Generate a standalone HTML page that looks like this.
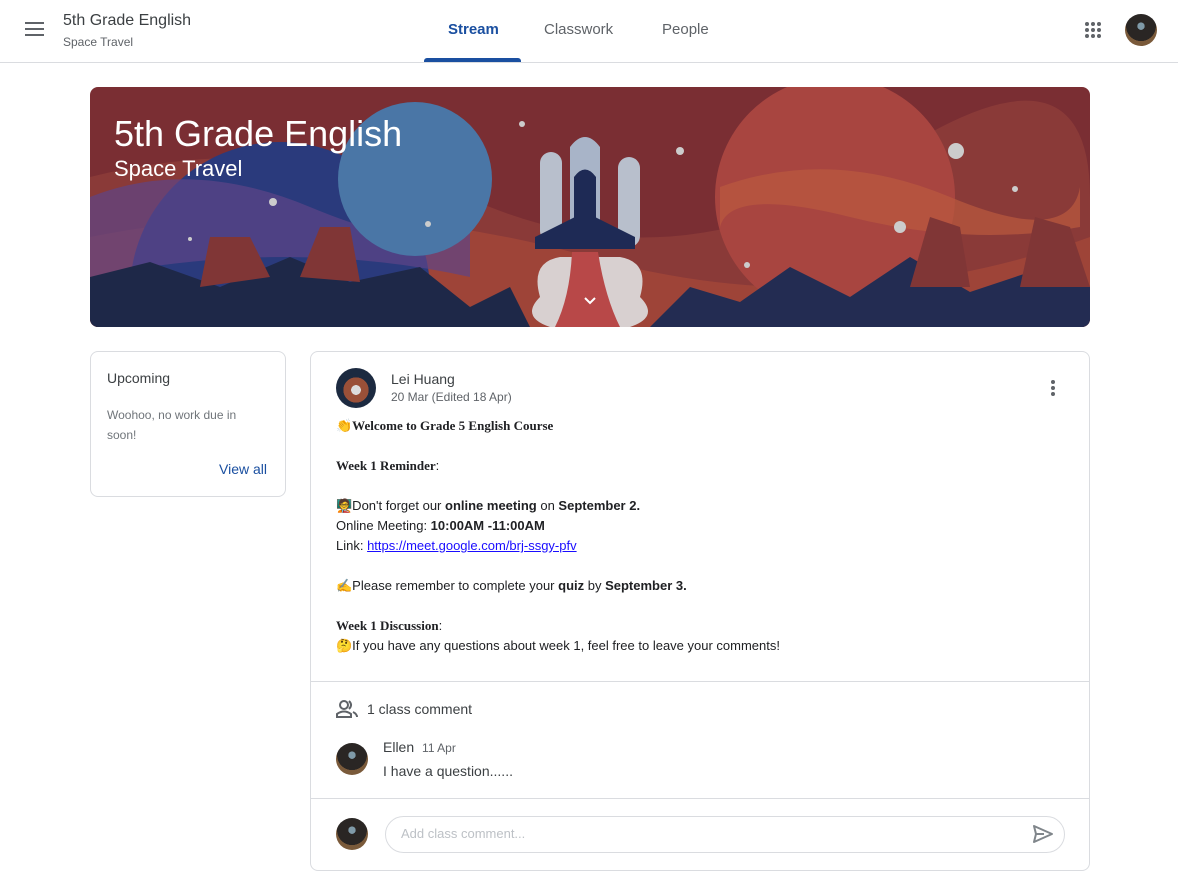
<!DOCTYPE html>
<html><head><meta charset="utf-8"><style>
*{box-sizing:border-box;margin:0;padding:0}
body{width:1178px;height:883px;overflow:hidden;background:#fff;font-family:"Liberation Sans",sans-serif;color:#3c4043;position:relative}
.a{position:absolute}
.hdr{left:0;top:0;width:1178px;height:63px;border-bottom:1px solid #dadce0}
.av{border-radius:50%;background:radial-gradient(circle at 50% 38%,#7f9aa8 0 14%,#2a2624 15% 58%,#7a5a3a 59%)}
.tab{top:21px;font-size:15px;color:#5f6368}
.card{border:1px solid #dadce0;border-radius:8px}
.post p{font-size:13px;line-height:20px;color:#202124;height:20px}
.serif{font-family:"Liberation Serif",serif;font-weight:bold}
</style></head><body>
<div class="a hdr">
 <div class="a" style="left:25px;top:22px;width:19px;height:2px;background:#5f6368;box-shadow:0 6px 0 #5f6368,0 12px 0 #5f6368"></div>
 <div class="a" style="left:63px;top:12px;font-size:16px;color:#3c4043">5th Grade English</div>
 <div class="a" style="left:63px;top:35px;font-size:12px;color:#5f6368">Space Travel</div>
 <div class="a tab" style="left:448px;color:#1a4fa0;font-weight:bold">Stream</div>
 <div class="a tab" style="left:544px">Classwork</div>
 <div class="a tab" style="left:662px">People</div>
 <div class="a" style="left:424px;top:58px;width:97px;height:4px;background:#1a4fa0;border-radius:3px 3px 0 0"></div>
 <svg class="a" style="left:1084px;top:21px" width="18" height="18"><g fill="#5f6368"><circle cx="3" cy="3" r="2"/><circle cx="9" cy="3" r="2"/><circle cx="15" cy="3" r="2"/><circle cx="3" cy="9" r="2"/><circle cx="9" cy="9" r="2"/><circle cx="15" cy="9" r="2"/><circle cx="3" cy="15" r="2"/><circle cx="9" cy="15" r="2"/><circle cx="15" cy="15" r="2"/></g></svg>
 <div class="a av" style="left:1125px;top:14px;width:32px;height:32px"></div>
</div>
<div class="a" style="left:90px;top:87px;width:1000px;height:240px;border-radius:8px;overflow:hidden;background:#7a2e33">
<svg width="1000" height="240" viewBox="0 0 1000 240">
 <path d="M0 90 Q200 40 400 120 T800 70 T1000 110 V240 H0Z" fill="#8a3a38"/>
 <path d="M0 150 Q250 100 500 170 T1000 150 V240 H0Z" fill="#9e4438"/>
 <circle cx="190" cy="205" r="150" fill="#2a3a7c"/>
 <path d="M0 110 Q100 70 220 120 T380 140 L380 190 Q200 150 0 190Z" fill="#5e4488" opacity=".7"/>
 <circle cx="325" cy="92" r="77" fill="#4a76a6"/>
 <circle cx="745" cy="110" r="120" fill="#a84540"/>
 <path d="M630 100 Q740 60 860 110 T990 100 V140 Q880 160 760 130 T630 140Z" fill="#bb5a3e" opacity=".7"/>
 <rect x="450" y="65" width="22" height="90" rx="11" fill="#b8bfcc"/>
 <rect x="528" y="70" width="22" height="90" rx="11" fill="#b8bfcc"/>
 <path d="M480 60 Q495 40 510 60 V150 H480Z" fill="#a8b4c8"/>
 <path d="M484 90 Q495 75 506 90 V140 H484Z" fill="#1e2a55"/>
 <path d="M445 150 L485 130 L505 130 L545 150 V162 H445Z" fill="#1e2a55"/>
 <path d="M470 170 Q440 175 450 210 Q430 230 460 240 H540 Q570 230 550 210 Q560 175 530 170Z" fill="#d8d0d0"/>
 <path d="M482 165 H508 Q515 210 530 240 H465 Q480 210 482 165Z" fill="#b84848"/>
 <path d="M0 190 L60 175 L130 200 L200 170 L260 195 L330 180 L380 220 L420 200 L440 240 H0Z" fill="#1e2848"/>
 <path d="M560 240 L600 200 L650 215 L700 180 L760 210 L820 170 L880 205 L940 185 L1000 200 V240Z" fill="#232c52"/>
 <path d="M110 200 L120 150 L160 150 L180 190Z M210 190 L230 140 L260 140 L270 195Z M820 200 L840 130 L870 140 L880 200Z M930 200 L945 130 L980 140 L1000 200Z" fill="#803636"/>
 <g fill="#ccc"><circle cx="183" cy="115" r="4"/><circle cx="432" cy="37" r="3"/><circle cx="590" cy="64" r="4"/><circle cx="866" cy="64" r="8"/><circle cx="810" cy="140" r="6"/><circle cx="925" cy="102" r="3"/><circle cx="338" cy="137" r="3"/><circle cx="657" cy="178" r="3"/><circle cx="100" cy="152" r="2"/></g>
</svg>
 <div class="a" style="left:24px;top:26px;font-size:36px;color:#fff">5th Grade English</div>
 <div class="a" style="left:24px;top:69px;font-size:22px;color:#fff">Space Travel</div>
 <svg class="a" style="left:493px;top:209px" width="14" height="10"><path d="M2 2 L7 7 L12 2" stroke="#fff" stroke-width="2" fill="none"/></svg>
</div>
<div class="a card" style="left:90px;top:351px;width:196px;height:146px">
 <div class="a" style="left:16px;top:18px;font-size:14px;color:#3c4043">Upcoming</div>
 <div class="a" style="left:16px;top:53px;font-size:12px;line-height:20px;color:#70757a;width:160px">Woohoo, no work due in soon!</div>
 <div class="a" style="left:128px;top:109px;font-size:14px;color:#1a4fa0">View all</div>
</div>
<div class="a card post" style="left:310px;top:351px;width:780px;height:520px">
 <div class="a" style="left:25px;top:16px;width:40px;height:40px;border-radius:50%;background:radial-gradient(circle at 50% 55%,#ddd 0 16%,#9a5038 17% 42%,#1c2a40 43%)"></div>
 <div class="a" style="left:80px;top:19px;font-size:14px;color:#3c4043">Lei Huang</div>
 <div class="a" style="left:80px;top:38px;font-size:12px;color:#5f6368">20 Mar (Edited 18 Apr)</div>
 <svg class="a" style="left:739px;top:27px" width="6" height="18"><g fill="#5f6368"><circle cx="3" cy="3" r="2"/><circle cx="3" cy="9" r="2"/><circle cx="3" cy="15" r="2"/></g></svg>
 <div class="a" style="left:25px;top:64px;width:700px">
  <p class="serif">👏Welcome to Grade 5 English Course</p><p></p>
  <p><span class="serif">Week 1 Reminder</span>:</p><p></p>
  <p>🧑‍🏫Don't forget our <b>online meeting</b> on <b>September 2.</b></p>
  <p>Online Meeting: <b>10:00AM -11:00AM</b></p>
  <p>Link: <u style="color:#1a0dff">https://meet.google.com/brj-ssgy-pfv</u></p><p></p>
  <p>✍️Please remember to complete your <b>quiz</b> by <b>September 3.</b></p><p></p>
  <p><span class="serif">Week 1 Discussion</span>:</p>
  <p>🤔If you have any questions about week 1, feel free to leave your comments!</p>
 </div>
 <div class="a" style="left:0;top:329px;width:778px;border-top:1px solid #dadce0"></div>
 <svg class="a" style="left:25px;top:347px" width="22" height="20"><g fill="none" stroke="#5f6368" stroke-width="2"><circle cx="8" cy="6" r="4"/><path d="M1 18 V15 Q8 10 15 15 V18Z"/><path d="M13 2 Q17 6 13 10 M17 13 Q21 15 21 18"/></g></svg>
 <div class="a" style="left:56px;top:349px;font-size:14px;color:#3c4043">1 class comment</div>
 <div class="a av" style="left:25px;top:391px;width:32px;height:32px"></div>
 <div class="a" style="left:72px;top:387px;font-size:14px;color:#3c4043">Ellen <span style="font-size:12px;color:#5f6368;margin-left:4px">11 Apr</span></div>
 <div class="a" style="left:72px;top:411px;font-size:14px;color:#3c4043">I have a question......</div>
 <div class="a" style="left:0;top:446px;width:778px;border-top:1px solid #dadce0"></div>
 <div class="a av" style="left:25px;top:466px;width:32px;height:32px"></div>
 <div class="a" style="left:74px;top:464px;width:680px;height:37px;border:1px solid #dadce0;border-radius:19px"></div>
 <div class="a" style="left:90px;top:474px;font-size:13px;color:#bdc1c6">Add class comment...</div>
 <svg class="a" style="left:721px;top:472px" width="22" height="20"><path d="M2 2 L20 10 L2 18 L4 10Z M4 10 H12" fill="none" stroke="#80868b" stroke-width="2" stroke-linejoin="round"/></svg>
</div>
</body></html>
